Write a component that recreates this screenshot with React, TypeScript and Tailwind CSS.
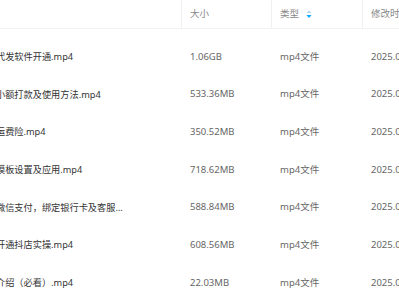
const rows = [
  { name: "代发软件开通.mp4", size: "1.06GB" },
  { name: "小额打款及使用方法.mp4", size: "533.36MB" },
  { name: "运费险.mp4", size: "350.52MB" },
  { name: "模板设置及应用.mp4", size: "718.62MB" },
  { name: "微信支付，绑定银行卡及客服...", size: "588.84MB" },
  { name: "开通抖店实操.mp4", size: "608.56MB" },
  { name: "介绍（必看）.mp4", size: "22.03MB" },
];

function SortIcon() {
  return (
    <svg width="6" height="10" viewBox="0 0 6 10" className="ml-[7px]">
      <path d="M3 1 L5.5 4 L0.5 4 Z" fill="#c4d8f0" />
      <path d="M3 9 L5.5 6 L0.5 6 Z" fill="#06a7ff" />
    </svg>
  );
}

export default function App() {
  return (
    <div
      className="w-[399px] h-[300px] overflow-hidden bg-white text-[9.5px]"
      style={{ fontFamily: '"Noto Sans", "Noto Sans CJK SC", sans-serif' }}
    >
      {/* Header */}
      <div className="flex h-[29px] border-b border-[#f2f2f2] text-[#888]">
        <div className="w-[182px] shrink-0 border-r border-[#f0f0f0]" />
        <div className="w-[90px] shrink-0 flex items-center pl-[8px] border-r border-[#f0f0f0]">
          大小
        </div>
        <div className="w-[91px] shrink-0 flex items-center pl-[8px] border-r border-[#f0f0f0]">
          类型
          <SortIcon />
        </div>
        <div className="shrink-0 flex items-center pl-[8px] whitespace-nowrap">
          修改时间
        </div>
      </div>

      {/* Rows */}
      <div className="pt-[9px]">
        {rows.map((r) => (
          <div key={r.name} className="flex h-[37.67px] items-center">
            <div className="w-[182px] shrink-0 overflow-hidden">
              <span className="block ml-[-4px] whitespace-nowrap text-[9.2px] text-[#333]">{r.name}</span>
            </div>
            <div className="w-[90px] shrink-0 pl-[8px] text-[#666]">{r.size}</div>
            <div className="w-[91px] shrink-0 pl-[8px] text-[#666]">mp4文件</div>
            <div className="shrink-0 pl-[8px] whitespace-nowrap text-[#666]">2025.03.12</div>
          </div>
        ))}
      </div>
    </div>
  );
}
